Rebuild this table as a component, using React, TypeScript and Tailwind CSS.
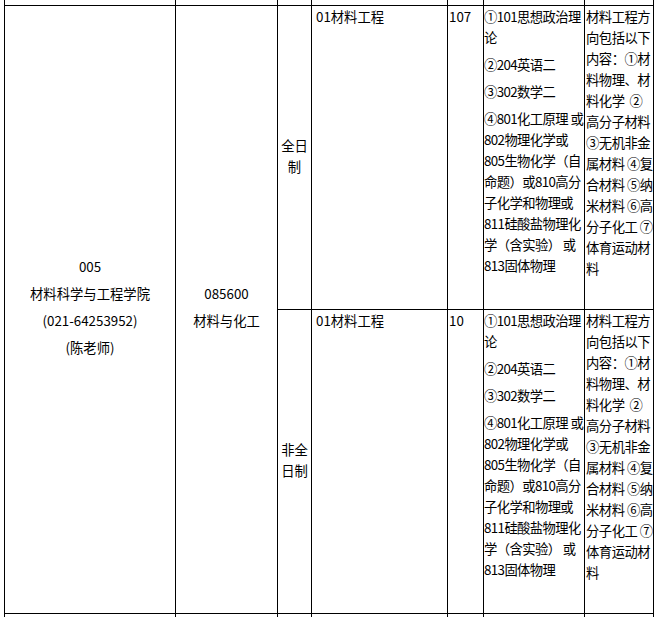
const FONT = "font-['Microsoft_YaHei','Noto_Sans_CJK_SC',sans-serif]";

const EXAM = [
  ["①101思想政治理", "论"],
  ["②204英语二"],
  ["③302数学二"],
  [
    "④801化工原理 或",
    "802物理化学或",
    "805生物化学（自",
    "命题）或810高分",
    "子化学和物理或",
    "811硅酸盐物理化",
    "学（含实验） 或",
    "813固体物理",
  ],
];

const NOTE = [
  "材料工程方",
  "向包括以下",
  "内容：①材",
  "料物理、材",
  "料化学  ②",
  "高分子材料",
  "③无机非金",
  "属材料 ④复",
  "合材料 ⑤纳",
  "米材料 ⑥高",
  "分子化工 ⑦",
  "体育运动材",
  "料",
];

const ROWS = [
  { mode: "全日制", count: "107" },
  { mode: "非全日制", count: "10" },
];

const Lines = ({ lines }: { lines: string[] }) => (
  <p className="whitespace-pre">
    {lines.map((l, i) => (
      <span key={i} className="block">{l}</span>
    ))}
  </p>
);

const App = () => {
  return (
    <div className={`h-[617px] overflow-hidden bg-white text-[13.33px] leading-[21px] text-black ${FONT}`}>
      <div className="ml-[4px] grid w-[650px] grid-cols-[170px_101px_33px_135px_35px_100px_68px] grid-rows-[5px_303px_303px_40px] gap-px bg-black px-px">
        {/* tail of the row above */}
        {Array.from({ length: 7 }).map((_, i) => (
          <div key={i} className="bg-white" />
        ))}

        <div className="row-span-2 flex flex-col items-center justify-center gap-[6px] bg-white pb-[6px] text-center">
          <p>005</p>
          <p>材料科学与工程学院</p>
          <p>(021-64253952)</p>
          <p>(陈老师)</p>
        </div>
        <div className="row-span-2 flex flex-col items-center justify-center gap-[6px] bg-white pb-[6px] text-center">
          <p>085600</p>
          <p>材料与化工</p>
        </div>

        {ROWS.map((r, idx) => (
          <div key={r.mode} className="contents">
            <div
              className={`flex items-center justify-center bg-white pb-[4px] text-center ${idx === 1 ? "col-start-3" : ""}`}
            >
              <p className="w-[28px]">{r.mode}</p>
            </div>
            <div className="bg-white pl-[4px]">01材料工程</div>
            <div className="bg-white pl-px">{r.count}</div>
            <div className="flex flex-col gap-[6px] overflow-hidden bg-white tracking-[-0.6px]">
              {EXAM.map((p, i) => (
                <Lines key={i} lines={p} />
              ))}
            </div>
            <div className="overflow-hidden bg-white pl-px tracking-[-0.5px]">
              <Lines lines={NOTE} />
            </div>
          </div>
        ))}

        {Array.from({ length: 7 }).map((_, i) => (
          <div key={`b${i}`} className="bg-white" />
        ))}
      </div>
    </div>
  );
};

export default App;
